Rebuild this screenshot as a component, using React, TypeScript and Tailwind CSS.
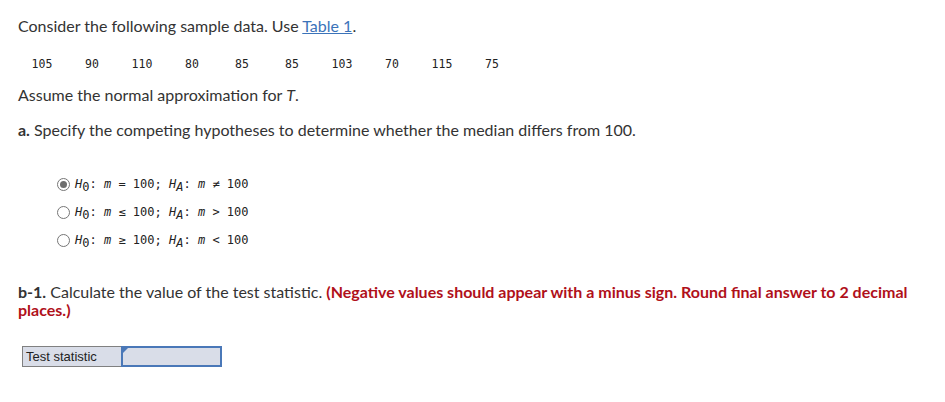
import React from 'react';

const DATA = [105, 90, 110, 80, 85, 85, 103, 70, 115, 75];

const OPTIONS = [
  { rel0: '=', relA: '≠', checked: true },
  { rel0: '≤', relA: '>', checked: false },
  { rel0: '≥', relA: '<', checked: false },
];

const Radio = ({ checked }: { checked: boolean }) => (
  <span className="w-[13px] h-[13px] rounded-full border border-[#767676] bg-white flex items-center justify-center shrink-0">
    {checked && <span className="w-[7px] h-[7px] rounded-full bg-[#6e6e6e]" />}
  </span>
);

const Sub = ({ children }: { children: React.ReactNode }) => (
  <span className="relative top-[3px]">{children}</span>
);

const App: React.FC = () => {
  return (
    <div className="w-[945px] h-[402px] bg-white text-[#333] font-['Lato','Noto_Sans',sans-serif] text-[16px] overflow-hidden">
      <div className="pl-[18px] pt-[16px]">
        <p className="leading-[20px]">
          Consider the following sample data. Use{' '}
          <a className="text-[#3b73b9] underline">Table 1</a>.
        </p>

        {/* data row */}
        <div className="flex mt-[21px] font-['DejaVu_Sans_Mono',monospace] text-[11.5px] leading-[14px] text-[#222] -ml-px">
          {DATA.map((v, i) => (
            <span key={i} className="w-[50px] text-center">{v}</span>
          ))}
        </div>

        <p className="mt-[14px] leading-[20px]">
          Assume the normal approximation for <i>T</i>.
        </p>

        <p className="mt-[15px] leading-[20px]">
          <b>a.</b> Specify the competing hypotheses to determine whether the median differs from 100.
        </p>

        {/* hypotheses */}
        <div className="mt-[37px] pl-[39px] flex flex-col gap-[14px] font-['DejaVu_Sans_Mono',monospace] text-[12px] leading-[14px] text-[#222]">
          {OPTIONS.map((o, i) => (
            <div key={i} className="flex items-center gap-[5px]">
              <Radio checked={o.checked} />
              <span className="whitespace-pre">
                <i>H</i><Sub>0</Sub>: <i>m</i> {o.rel0} 100; <i>H</i><Sub><i>A</i></Sub>: <i>m</i> {o.relA} 100
              </span>
            </div>
          ))}
        </div>

        <p className="mt-[36px] leading-[18px] pr-[20px]">
          <b>b-1.</b> Calculate the value of the test statistic.{' '}
          <b className="text-[#b0101a]">(Negative values should appear with a minus sign. Round final answer to 2 decimal places.)</b>
        </p>

        {/* answer table */}
        <div className="mt-[27px] ml-[4px] flex w-[200px] h-[21px] border border-[#808080] bg-[#d9dde8] font-['Liberation_Sans',sans-serif] text-[13px] text-[#222]">
          <div className="w-[99px] border-r border-[#808080] pl-[3px] leading-[19px]">Test statistic</div>
          <div className="relative flex-1 border-2 border-[#4a78b8] -m-px">
            <span className="absolute left-0 top-0 w-0 h-0 border-t-[5px] border-t-[#4a78b8] border-r-[5px] border-r-transparent" />
          </div>
        </div>
      </div>
    </div>
  );
};

export default App;
